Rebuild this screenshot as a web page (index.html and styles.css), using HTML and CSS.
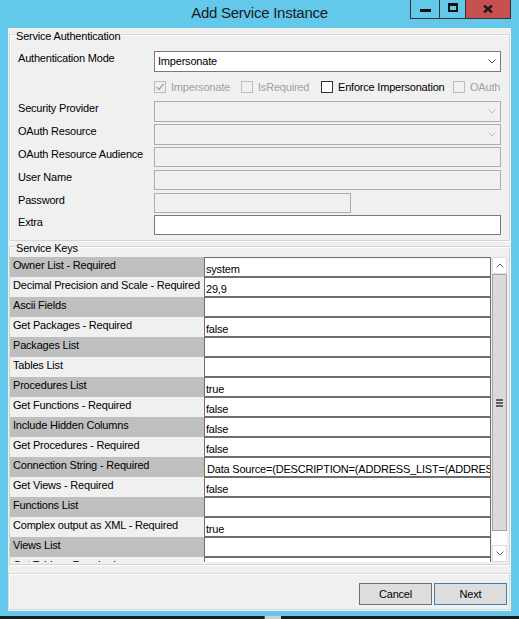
FILE: index.html
```html
<!DOCTYPE html>
<html>
<head>
<meta charset="UTF-8">
<title>Add Service Instance</title>
<link rel="stylesheet" href="styles.css">
</head>
<body>

<div class="window">
  <div class="titlebar">
    <div class="title">Add Service Instance</div>
    <div class="caption">
      <span class="capbtn min"><svg width="11" height="4" viewBox="0 0 11 4"><rect x="0" y="0" width="11" height="3" fill="#111"/></svg></span>
      <span class="capbtn max"><svg width="10" height="9" viewBox="0 0 10 9"><path d="M1 1.5H9V8H1Z" fill="none" stroke="#111" stroke-width="2"/><rect x="0" y="0" width="10" height="3" fill="#111"/></svg></span>
      <span class="capbtn close"><svg width="10" height="8" viewBox="0 0 10 8"><path d="M1 0.5L9 7.5M9 0.5L1 7.5" stroke="#1a1a1a" stroke-width="2.4"/></svg></span>
    </div>
  </div>

  <div class="client">

    <div class="group auth">
      <span class="group-title">Service Authentication</span>
      <div class="form">
        <label class="lbl">Authentication Mode</label>
        <div class="combo">
          <span>Impersonate</span>
          <svg width="8" height="5" viewBox="0 0 8 5"><path d="M0.5 0.5L4 4L7.5 0.5" fill="none" stroke="#444"/></svg>
        </div>

        <span></span>
        <div class="checks">
          <span class="chk w1 off"><span class="box"><svg width="10" height="10" viewBox="0 0 10 10"><path d="M1.5 5L4 7.5L8.5 2" fill="none" stroke="#a3a3a3" stroke-width="1.4"/></svg></span>Impersonate</span>
          <span class="chk w2 off"><span class="box"></span>IsRequired</span>
          <span class="chk w3"><span class="box"></span>Enforce Impersonation</span>
          <span class="chk off"><span class="box"></span>OAuth</span>
        </div>

        <label class="lbl">Security Provider</label>
        <div class="combo disabled">
          <span></span>
          <svg width="8" height="5" viewBox="0 0 8 5"><path d="M0.5 0.5L4 4L7.5 0.5" fill="none" stroke="#bdbdbd"/></svg>
        </div>

        <label class="lbl">OAuth Resource</label>
        <div class="combo disabled">
          <span></span>
          <svg width="8" height="5" viewBox="0 0 8 5"><path d="M0.5 0.5L4 4L7.5 0.5" fill="none" stroke="#bdbdbd"/></svg>
        </div>

        <label class="lbl">OAuth Resource Audience</label>
        <div class="tb"></div>

        <label class="lbl">User Name</label>
        <div class="tb"></div>

        <label class="lbl">Password</label>
        <div class="tb short"></div>

        <label class="lbl">Extra</label>
        <div class="tb on"></div>
      </div>
    </div>

    <div class="group keys">
      <span class="group-title">Service Keys</span>
      <div class="keys-wrap">
        <div class="grid">
          <div class="row dark"><div class="key">Owner List - Required</div><div class="val">system</div></div>
          <div class="row"><div class="key">Decimal Precision and Scale - Required</div><div class="val">29,9</div></div>
          <div class="row dark"><div class="key">Ascii Fields</div><div class="val"></div></div>
          <div class="row"><div class="key">Get Packages - Required</div><div class="val">false</div></div>
          <div class="row dark"><div class="key">Packages List</div><div class="val"></div></div>
          <div class="row"><div class="key">Tables List</div><div class="val"></div></div>
          <div class="row dark"><div class="key">Procedures List</div><div class="val">true</div></div>
          <div class="row"><div class="key">Get Functions - Required</div><div class="val">false</div></div>
          <div class="row dark"><div class="key">Include Hidden Columns</div><div class="val">false</div></div>
          <div class="row"><div class="key">Get Procedures - Required</div><div class="val">false</div></div>
          <div class="row dark"><div class="key">Connection String - Required</div><div class="val conn">Data Source=(DESCRIPTION=(ADDRESS_LIST=(ADDRESS=(PROTOCOL=TCP)(HOST=localhost)(PORT=1521)))</div></div>
          <div class="row"><div class="key">Get Views - Required</div><div class="val">false</div></div>
          <div class="row dark"><div class="key">Functions List</div><div class="val"></div></div>
          <div class="row"><div class="key">Complex output as XML - Required</div><div class="val">true</div></div>
          <div class="row dark"><div class="key">Views List</div><div class="val"></div></div>
          <div class="row"><div class="key">Get Tables - Required</div><div class="val">false</div></div>
        </div>
        <div class="vscroll">
          <div class="sb-btn up"><svg width="8" height="5" viewBox="0 0 8 5"><path d="M0.5 4.5L4 1L7.5 4.5" fill="none" stroke="#606060"/></svg></div>
          <div class="thumb"><svg width="7" height="8" viewBox="0 0 7 8"><rect y="0" width="7" height="2" fill="#606060"/><rect y="3" width="7" height="2" fill="#606060"/><rect y="6" width="7" height="2" fill="#606060"/></svg></div>
          <div class="track"></div>
          <div class="sb-btn down"><svg width="8" height="5" viewBox="0 0 8 5"><path d="M0.5 0.5L4 4L7.5 0.5" fill="none" stroke="#606060"/></svg></div>
        </div>
      </div>
    </div>

    <div class="footer">
      <button class="btn">Cancel</button>
      <button class="btn primary">Next</button>
    </div>

  </div>
</div>
<div class="desk"><span class="desk-piece"></span></div>

</body>
</html>
```

FILE: styles.css
```css
body { margin:0; background:#1c1c1c; font-family:"Liberation Sans", Arial, sans-serif; font-size:11px; letter-spacing:-0.2px; color:#000; }
.window { height:616px; background:#64c8ea; display:flex; flex-direction:column; }

/* title bar */
.titlebar { height:28px; flex:none; display:grid; grid-template-columns:1fr auto 1fr; }
.title { grid-column:2; font-size:15px; line-height:26px; letter-spacing:-0.25px; color:#1b1b1b; }
.caption { grid-column:3; justify-self:end; align-self:start; margin-right:8px; display:flex; height:18px; border:1px solid #333; border-top:0; }
.capbtn { display:flex; align-items:center; justify-content:center; height:18px; }
.capbtn.min { width:28px; border-right:1px solid #333; }
.capbtn.min svg { margin-top:4px; }
.capbtn.max { width:25px; border-right:1px solid #333; }
.capbtn.max svg { margin-top:-3px; }
.capbtn.close { width:44px; background:#c75050; }
.capbtn.close svg { margin-top:-1px; }

.client { flex:none; height:583px; margin:0 8px; background:#f0f0f0; display:flex; flex-direction:column; }

/* group boxes */
.group { position:relative; margin:0 1px; border:1px solid #d5d5d5; box-shadow:inset 1px 1px 0 #fff, 1px 1px 0 #fff; }
.group-title { position:absolute; top:-6px; left:5px; padding:0 1px; background:#f0f0f0; line-height:14px; }
.auth { margin-top:6px; height:205px; padding:16px 8px 0 8px; box-sizing:content-box; height:184px; padding-bottom:5px; }
.keys { margin-top:5px; padding:10px 1px 2px 0; }

/* auth form */
.form { display:grid; grid-template-columns:136px 347px; grid-template-rows:26px 24px 23px 23px 23px 23px 22px 20px; }
.lbl { line-height:14px; }
.combo { height:21px; box-sizing:border-box; border:1px solid #7a7a7a; background:#fff; display:flex; align-items:center; justify-content:space-between; padding:0 4px 0 3px; line-height:19px; }
.combo.disabled { border-color:#acacac; background:#f0f0f0; }
.tb { height:20px; box-sizing:border-box; border:1px solid #adadad; background:#f0f0f0; }
.tb.short { width:197px; }
.tb.on { border-color:#7a7a7a; background:#fff; }

.checks { height:20px; display:flex; align-items:center; white-space:nowrap; }
.chk { display:flex; align-items:center; }
.chk.w1 { width:87px; }
.chk.w2 { width:80px; }
.chk.w3 { width:132px; }
.chk .box { width:12px; height:12px; box-sizing:border-box; border:1px solid #333; background:#fff; margin-right:5px; display:flex; align-items:center; justify-content:center; }
.chk.off { color:#a0a0a0; }
.chk.off .box { border-color:#bcbcbc; background:#f0f0f0; }

/* service keys grid */
.keys-wrap { display:flex; height:305px; }
.grid { width:481px; overflow:hidden; }
.row { display:grid; grid-template-columns:194px 287px; height:20px; }
.key { background:#f0f0f0; padding:1px 0 0 3px; line-height:14px; white-space:nowrap; overflow:hidden; }
.row.dark .key { background:#bfbfbf; }
.val { background:#fff; border:1px solid #6d6d6d; padding:4px 0 0 1px; line-height:14px; white-space:nowrap; overflow:hidden; }
.val.conn { padding-left:2px; }

.vscroll { width:15px; padding:0 1px; background:#f0f0f0; display:flex; flex-direction:column; }
.sb-btn { height:17px; box-sizing:border-box; border:1px solid #dcdcdc; background:#fff; display:flex; align-items:center; justify-content:center; flex:none; }
.thumb { height:257px; box-sizing:border-box; border:1px solid #a6a6a6; background:#dadada; display:flex; align-items:center; justify-content:center; flex:none; }
.track { height:14px; background:#fff; flex:none; }

/* bottom buttons */
.footer { margin:8px 1px 0 0; height:35px; border:1px solid #dadada; box-shadow:inset 1px 1px 0 #fff; display:flex; justify-content:flex-end; align-items:flex-start; gap:2px; padding:9px 2px 0 0; box-sizing:content-box; height:26px; }
.btn { width:73px; height:22px; box-sizing:border-box; border:1px solid #707070; background:#dddddd; font:inherit; letter-spacing:inherit; color:#000; padding:0; }
.btn.primary { border-color:#3c7fb1; }

.desk { height:3px; }
.desk-piece { display:block; margin-left:264px; width:16px; height:3px; background:#cfcfcf; border-left:1px solid #555; }
```
